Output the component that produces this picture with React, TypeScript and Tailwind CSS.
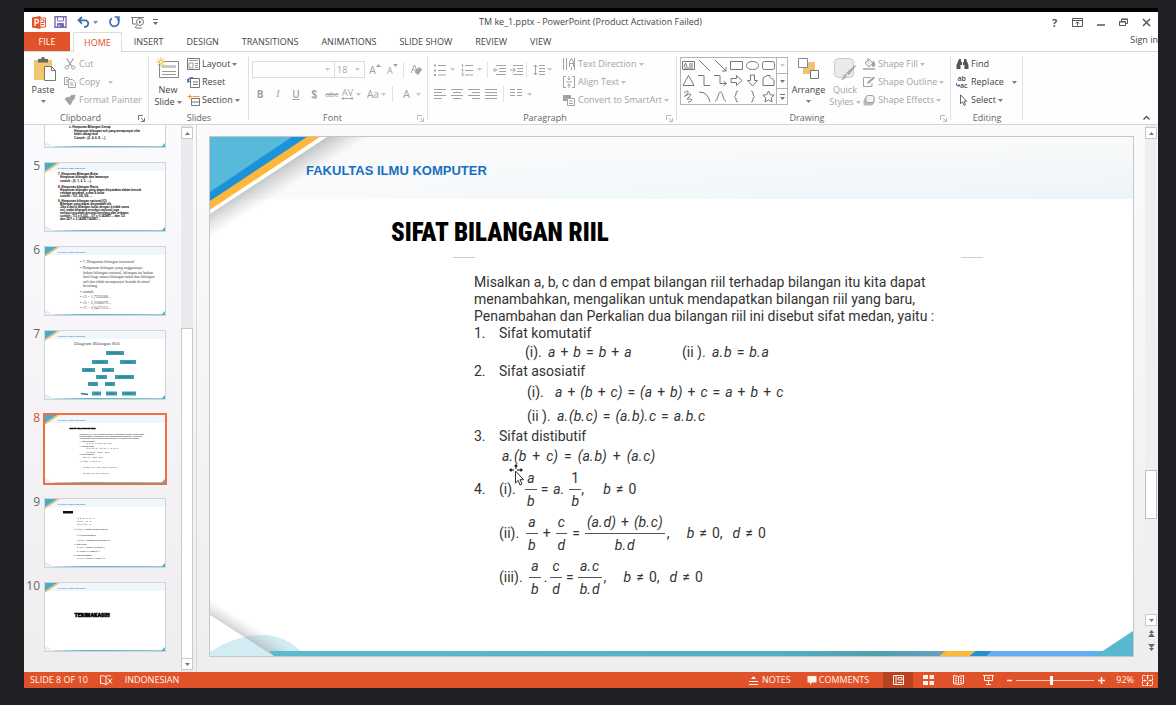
import React from "react";
import type { ReactNode } from "react";

type Kids = { children?: ReactNode };

/* ---------- small building blocks ---------- */

function Icon({ w = 12, h = 12, className = "", children }: Kids & { w?: number; h?: number; className?: string }) {
  return (
    <svg
      width={w}
      height={h}
      viewBox={`0 0 ${w} ${h}`}
      className={`shrink-0 ${className}`}
      fill="none"
      stroke="currentColor"
      strokeWidth="1"
      aria-hidden="true"
    >
      {children}
    </svg>
  );
}

function Caret({ className = "" }: { className?: string }) {
  return (
    <Icon w={5} h={3} className={className}>
      <path d="M0 0h5L2.500 3z" fill="currentColor" stroke="none" />
    </Icon>
  );
}

function Launcher({ className = "text-[#888]" }: { className?: string }) {
  return (
    <button aria-label="More options" className={`absolute right-1 bottom-[2px] ${className}`}>
      <Icon w={7} h={7}>
        <path d="M.5 5V.5H5M3 3l3 3M6.500 3v3.500H3" />
      </Icon>
    </button>
  );
}

function Group({ label, className, launcher, children }: Kids & { label: string; className: string; launcher?: string }) {
  return (
    <section
      aria-label={label}
      className={`relative flex shrink-0 flex-col after:absolute after:top-1 after:right-0 after:bottom-1 after:w-px after:bg-[#e1e1e1] ${className}`}
    >
      <div className="flex flex-1 items-start">{children}</div>
      <div className="h-3 text-center leading-3 text-[#666]">{label}</div>
      {launcher && <Launcher className={launcher} />}
    </section>
  );
}

function Row({ icon, label, caret, wide, dim }: { icon: ReactNode; label: string; caret?: boolean; wide?: boolean; dim?: boolean }) {
  return (
    <button className={`flex h-[18px] items-center whitespace-nowrap ${dim ? "text-[#a3a3a3]" : "text-[#444]"}`}>
      <span className="flex w-[15px] items-center">{icon}</span>
      {label}
      {caret && <Caret className={wide ? "ml-2 opacity-70" : "ml-[2px] opacity-70"} />}
    </button>
  );
}

function Sep({ className = "" }: { className?: string }) {
  return <span className={`h-4 w-px bg-[#e3e3e3] ${className}`} />;
}

/* ---------- title bar and tabs ---------- */

function TitleBar() {
  return (
    <header className="flex h-5 items-center bg-white text-[#444]">
      <div className="flex flex-1 items-center pl-2">
        <Icon w={14} h={13}>
          <path d="M7 2h6.500v9H7" fill="#fff" stroke="#e0532a" />
          <path d="M9 4h3v2.500H9M9 8.500h3" stroke="#e0532a" />
          <path d="M0 1.500 8.500 0v13L0 11.500z" fill="#e0532a" stroke="none" />
          <path d="M3 10V3.500h1.800a1.600 1.600 0 0 1 0 3.500H3" stroke="#fff" strokeWidth="1.300" />
        </Icon>
        <button aria-label="Save" className="ml-2 text-[#7a6bb0]">
          <Icon w={13} h={12}>
            <path d="M1 .8h11v10.500H1z" strokeWidth="1.400" />
            <path d="M3.500 1v4h6V1" />
            <path d="M3.500 7.500h6V11h-6z" fill="currentColor" />
            <path d="M5 9v2" stroke="#fff" />
          </Icon>
        </button>
        <button aria-label="Undo" className="ml-[10px] flex items-center text-[#3d6db5]">
          <Icon w={13} h={12}>
            <path d="M5 1 1.500 4.300 5 7.600M2 4.300h6a3.300 3.300 0 0 1 0 6.600H7" strokeWidth="1.800" />
          </Icon>
          <Caret className="ml-[3px] text-[#888]" />
        </button>
        <button aria-label="Repeat" className="ml-[10px] text-[#3d6db5]">
          <Icon w={13} h={12}>
            <path d="M4 2.200a4.400 4.400 0 1 0 5 .2" strokeWidth="1.700" />
            <path d="M6.500 1h4.500v4.500" strokeWidth="1.400" />
          </Icon>
        </button>
        <button aria-label="Start from beginning" className="ml-[10px] text-[#777]">
          <Icon w={14} h={13}>
            <path d="M0 1.500h13M1.500 2v6H5M4 12l2-3.500M5 12h6" />
            <circle cx="9" cy="6" r="3.500" fill="#fff" />
            <path d="M8 4.300v3.400L10.700 6z" fill="currentColor" stroke="none" />
          </Icon>
        </button>
        <button aria-label="Customize toolbar" className="ml-2 text-[#666]">
          <Icon w={5} h={6}>
            <path d="M0 .5h5" />
            <path d="M0 3h5L2.500 6z" fill="currentColor" stroke="none" />
          </Icon>
        </button>
      </div>
      <h1 className="pr-[9px] whitespace-nowrap">TM ke_1.pptx - PowerPoint (Product Activation Failed)</h1>
      <div className="flex flex-1 justify-end text-[#555]">
        <button aria-label="Help" className="flex w-[23px] items-center justify-center text-[11px] leading-none font-bold">
          ?
        </button>
        <button aria-label="Ribbon display options" className="flex w-[23px] items-center justify-center">
          <Icon w={11} h={9}>
            <path d="M.5.5h10v8H.5zM.5 2.500h10M5.500 7.500V4M3.800 5.500l1.700-1.700 1.700 1.700" />
          </Icon>
        </button>
        <button aria-label="Minimize" className="flex w-[23px] items-center justify-center">
          <Icon w={8} h={9}>
            <path d="M0 7h8" strokeWidth="1.500" />
          </Icon>
        </button>
        <button aria-label="Restore" className="flex w-[23px] items-center justify-center">
          <Icon w={9} h={9}>
            <path d="M.5 3.500h6v4h-6zM.5 4h6M2.500 3V1h6v4.500H7M2.500 1.300h6" />
          </Icon>
        </button>
        <button aria-label="Close" className="flex w-[23px] items-center justify-center">
          <Icon w={9} h={9}>
            <path d="m1 1 7 7M8 1 1 8" strokeWidth="1.500" />
          </Icon>
        </button>
      </div>
    </header>
  );
}

function Tabs() {
  const tabs = ["INSERT", "DESIGN", "TRANSITIONS", "ANIMATIONS", "SLIDE SHOW", "REVIEW", "VIEW"];
  return (
    <nav className="flex h-5 gap-px border-b border-[#d9d9d9] bg-white text-[#444]">
      <button className="w-[46px] bg-[#e0532a] text-white">FILE</button>
      <button className="-mb-px ml-[2px] border border-b-0 border-[#dcdcdc] bg-white px-[10px] text-[#dd4f2b]">HOME</button>
      {tabs.map((t) => (
        <button key={t} className="px-[11px] whitespace-nowrap">
          {t}
        </button>
      ))}
      <a href="#signin" className="ml-auto leading-4">
        Sign in
      </a>
    </nav>
  );
}

/* ---------- ribbon ---------- */

function BigButton({ icon, lines, caretBelow, dim, className }: { icon: ReactNode; lines: string[]; caretBelow?: boolean; dim?: boolean; className: string }) {
  return (
    <button className={`flex shrink-0 flex-col items-center pt-[5px] leading-3 ${dim ? "text-[#a3a3a3]" : "text-[#444]"} ${className}`}>
      {icon}
      <span className="mt-[2px]">{lines[0]}</span>
      {lines[1] && (
        <span className="flex items-center gap-[2px]">
          {lines[1]}
          <Caret className="opacity-70" />
        </span>
      )}
      {caretBelow && <Caret className="mt-1 opacity-70" />}
    </button>
  );
}

function ClipboardGroup() {
  return (
    <Group label="Clipboard" className="w-[125px] pr-3" launcher="text-[#777]">
      <BigButton
        className="w-[38px]"
        lines={["Paste"]}
        caretBelow
        icon={
          <Icon w={24} h={25} className="ml-1">
            <path d="M1 3h18v20H1z" fill="#f0c66e" stroke="none" />
            <path d="M5 2h3a2 2 0 0 1 4 0h3v3.500H5z" fill="#666" stroke="none" />
            <path d="M11.500 9.500h7l4 4v10h-11z" fill="#fff" stroke="#777" />
            <path d="M18.500 9.500v4h4" stroke="#777" />
          </Icon>
        }
      />
      <div className="flex shrink-0 flex-col pt-[3px] pl-[2px]">
        <Row
          dim
          label="Cut"
          icon={
            <Icon>
              <path d="m2.500.5 5.500 8M9.500.5 4 8.500" strokeWidth="1.300" />
              <circle cx="2.700" cy="9.500" r="1.700" />
              <circle cx="9.300" cy="9.500" r="1.700" />
            </Icon>
          }
        />
        <Row
          dim
          label="Copy"
          caret
          wide
          icon={
            <Icon>
              <path d="M4 8.500H.5v-7h4l2 2M2 4h2M2 6h2" />
              <path d="M4.500 3.500h4l3 3v5h-7zM6 7h3M6 9h4" fill="#fff" />
            </Icon>
          }
        />
        <Row
          dim
          label="Format Painter"
          icon={
            <Icon>
              <path d="m1 5 3-2 4 4.500L6 11z" fill="currentColor" />
              <path d="M5.500 4.500 8 2l2 2-2 2zM9 3l2-2" fill="currentColor" strokeWidth="2" />
            </Icon>
          }
        />
      </div>
    </Group>
  );
}

function SlidesGroup() {
  return (
    <Group label="Slides" className="w-[100px]">
      <BigButton
        className="w-[38px]"
        lines={["New", "Slide"]}
        icon={
          <Icon w={24} h={25}>
            <path d="M3.500 4.500h19v16h-19z" fill="#fff" stroke="#888" />
            <path d="M6 8h14v3H6z" fill="#c9c9c9" stroke="none" />
            <path d="M6 14.500h14M6 17.500h14" stroke="#999" />
            <path d="M5 0v10M0 5h10M1.500 1.500l7 7M8.500 1.500l-7 7" stroke="#eebf55" />
            <circle cx="5" cy="5" r="2" fill="#fff3cf" stroke="#eebf55" />
          </Icon>
        }
      />
      <div className="flex shrink-0 flex-col pt-[3px]">
        <Row
          label="Layout"
          caret
          icon={
            <Icon w={13} h={12}>
              <path d="M.5.500h12v11H.5z" stroke="#777" />
              <path d="M2 2.500h9M2 5h4v5H2zM8 5.500h3M8 7.500h3M8 9.500h3" stroke="#999" />
            </Icon>
          }
        />
        <Row
          label="Reset"
          icon={
            <Icon w={13} h={12}>
              <path d="M3.500 2.500h9v9h-9zM6 6h5M6 8.500h5" stroke="#777" />
              <path d="M1 5.500C1 2 4 .8 7 2.500M.5 3l.5 3 3-1" stroke="#3d6db5" strokeWidth="1.300" />
            </Icon>
          }
        />
        <Row
          label="Section"
          caret
          icon={
            <Icon w={13} h={12}>
              <path d="M4.500 4.500h8v7h-8zM4.500 8h8" stroke="#777" />
              <path d="M6 2.500h6.500M3 0v5M.5 2.500h5" stroke="#e99a3c" />
            </Icon>
          }
        />
      </div>
    </Group>
  );
}

function FontGroup() {
  const btn = "flex h-4 w-[18px] items-center justify-center";
  return (
    <Group label="Font" className="w-[179px] pr-3" launcher="text-[#bbb]">
      <div className="flex shrink-0 flex-col pt-[9px] pl-[3px] text-[#a3a3a3]">
        <div className="flex h-[17px] items-center">
          <label className="relative flex h-full w-[83px] items-center border border-[#dcdcdc]">
            <input aria-label="Font name" className="w-full bg-transparent px-1 outline-none" />
            <Caret className="mr-1 opacity-60" />
          </label>
          <label className="-ml-px flex h-full w-[31px] items-center border border-[#dcdcdc]">
            <input aria-label="Font size" defaultValue="18" className="w-5 bg-transparent pl-[2px] outline-none" />
            <Caret className="opacity-60" />
          </label>
          <button aria-label="Increase font size" className="ml-1 flex w-[18px] items-start leading-none">
            <span className="text-[11px]">A</span>
            <Icon w={5} h={3}>
              <path d="M0 3h5L2.500 0z" fill="currentColor" stroke="none" />
            </Icon>
          </button>
          <button aria-label="Decrease font size" className="flex w-[14px] items-start leading-none">
            <span className="pt-[2px] text-[9px]">A</span>
            <Caret />
          </button>
          <Sep className="ml-[2px]" />
          <button aria-label="Clear formatting" className="ml-[6px]">
            <Icon>
              <path d="m1 9 3.500-8L8 9M2.500 6h4" />
              <path d="m5 8 4-4.500 2.500 2L8 10.500z" fill="currentColor" />
            </Icon>
          </button>
        </div>
        <div className="mt-2 flex h-4 items-center text-[10px]">
          <button className={`${btn} -ml-[1px] font-bold`}>B</button>
          <button className={`${btn} font-[Liberation_Serif] italic`}>I</button>
          <button className={`${btn} font-semibold underline`}>U</button>
          <button className={`${btn} font-bold [text-shadow:1px_1px_0_#ccc]`}>S</button>
          <button className={`${btn} text-[8px] line-through`}>abc</button>
          <button className="flex w-[23px] items-center gap-[2px]">
            <span className="flex flex-col items-center text-[9px] leading-[9px]">
              AV
              <Icon w={13} h={3}>
                <path d="M1 1.500h11M2.500 0 1 1.500 2.500 3M10.500 0 12 1.500 10.500 3" />
              </Icon>
            </span>
            <Caret className="opacity-60" />
          </button>
          <button className="ml-[3px] flex w-[22px] items-center gap-[2px]">
            Aa
            <Caret className="opacity-60" />
          </button>
          <Sep className="ml-[3px]" />
          <button aria-label="Font color" className="ml-[10px] flex items-center gap-[6px] text-[11px]">
            A
            <Caret className="opacity-60" />
          </button>
        </div>
      </div>
    </Group>
  );
}

function Lines({ d }: { d: string }) {
  return (
    <Icon w={13} h={10}>
      <path d={d} />
    </Icon>
  );
}

function ParagraphGroup() {
  const list = "flex items-center gap-1";
  return (
    <Group label="Paragraph" className="w-[249px] pr-[15px]" launcher="text-[#bbb]">
      <div className="flex w-[135px] shrink-0 flex-col pt-[9px] pl-[6px] text-[#a3a3a3]">
        <div className="flex h-[17px] items-center">
          <button aria-label="Bullets" className={list}>
            <Icon w={12} h={12}>
              <path d="M0 1.500h2M0 6.500h2M0 11h2" strokeWidth="2" />
              <path d="M4 1.500h8M4 6.500h8M4 11h8" />
            </Icon>
            <Caret className="opacity-60" />
          </button>
          <button aria-label="Numbering" className={`${list} ml-[6px]`}>
            <Icon w={12} h={12}>
              <path d="M1.500 0v3M.5 5h1v2h1M.5 9h1.500v3H.5M4 1.500h8M4 6.500h8M4 11h8" />
            </Icon>
            <Caret className="opacity-60" />
          </button>
          <Sep className="ml-[5px]" />
          <button aria-label="Decrease indent" className="ml-[5px]">
            <Lines d="M3 .5h10M6 3.500h7M6 6.500h7M3 9.500h10M5 5H.5M3 2.500.500 5 3 7.500" />
          </button>
          <button aria-label="Increase indent" className="ml-1">
            <Lines d="M3 .5h10M7 3.500h6M7 6.500h6M3 9.500h10M0 5h5M3 2.500 5.500 5 3 7.500" />
          </button>
          <Sep className="ml-[3px]" />
          <button aria-label="Line spacing" className={`${list} ml-[6px]`}>
            <Icon w={12} h={12}>
              <path d="M2.500 1v10M.5 3l2-2 2 2M.5 9l2 2 2-2M6 1.500h6M6 4.500h6M6 7.500h6M6 10.500h6" />
            </Icon>
          </button>
          <Caret className="ml-[2px] opacity-60" />
        </div>
        <div className="mt-2 flex h-4 items-center gap-1">
          <button aria-label="Align left">
            <Lines d="M0 .5h12M0 3.500h8M0 6.500h12M0 9.500h8" />
          </button>
          <button aria-label="Center">
            <Lines d="M0 .5h12M2 3.500h8M0 6.500h12M2 9.500h8" />
          </button>
          <button aria-label="Align right">
            <Lines d="M0 .5h12M4 3.500h8M0 6.500h12M4 9.500h8" />
          </button>
          <button aria-label="Justify">
            <Lines d="M0 .5h12M0 3.500h12M0 6.500h12M0 9.500h12" />
          </button>
          <Sep className="ml-[1px]" />
          <button aria-label="Columns" className={`${list} ml-[2px]`}>
            <Lines d="M0 .5h5M7 .5h5M0 3.500h5M7 3.500h5M0 6.500h5M7 6.500h5" />
            <Caret className="opacity-60" />
          </button>
        </div>
      </div>
      <div className="flex shrink-0 flex-col pt-[3px]">
        <Row
          dim
          caret
          label="Text Direction"
          icon={
            <Icon>
              <path d="M.5 0v12M3.500 0v12M6.500 9V4l2-3.500 2 3.500v5M6.500 5.500h4M8.500 9v3M11.500 0v12" />
            </Icon>
          }
        />
        <Row
          dim
          caret
          label="Align Text"
          icon={
            <Icon>
              <path d="M3 .500H.5v11H3M9 .500h2.500v11H9M3 6h6M6 0v4M4.500 2.500 6 4l1.500-1.500M6 12V8M4.500 9.500 6 8l1.500 1.500" />
            </Icon>
          }
        />
        <Row
          dim
          caret
          label="Convert to SmartArt"
          icon={
            <Icon>
              <path d="M0 1h8v3H4v3H0z" fill="currentColor" stroke="none" />
              <path d="M4.500 4.500h7v7h-7zM6 7h4M6 9.500h4" fill="#fff" />
            </Icon>
          }
        />
      </div>
    </Group>
  );
}

const shapePaths = [
  "M.5 2.500h12v8H.5zM2 8l1.500-4L5 8M7 5h4M7 7h4M2 9h9",
  "m1 1 11 11",
  "m1 1 11 11M12 8v4H8",
  "M.5 2.500h12v8H.5z",
  "M6.500 2.500c8 0 8 8 0 8s-8-8 0-8z",
  "M2.500 2.500h8q2 0 2 2v4q0 2-2 2h-8q-2 0-2-2v-4q0-2 2-2z",
  "M6.500 1.500 12 11.500H1z",
  "M0 1.500h6v10h6",
  "M0 1.500h6v8h6M9.500 7l3 2.500-3 2.500",
  "M1 4.500h5.500v-3L12 6.500l-5.500 5v-3H1z",
  "M4.500 1v5.500h-3L6.500 12l5-5.500h-3V1z",
  "M1 4l4-2.500h3C6.500 5 12 4 12 7v4.500H1z",
  "M2 3c3-3 6-2 3 1s-4 3 0 1 5-1 2 2-3 2 1 2 1 3-2 3",
  "M1 2q9 0 11 10",
  "M1 11C4 11 4 2 6.500 2S9 11 12 11",
  "M8 1q-2 0-2 2v2L4.500 6.500 6 8v2q0 2 2 2",
  "M5 1q2 0 2 2v2l1.500 1.500L7 8v2q0 2-2 2",
  "m6.500 1 1.700 3.700 4 .5-3 2.700.8 4-3.500-2L3 11.900l.8-4-3-2.700 4-.5z",
];

function DrawingGroup() {
  return (
    <Group label="Drawing" className="w-[274px] pr-[14px]" launcher="text-[#bbb]">
      <div className="mt-[5px] ml-[3px] flex h-[48px] w-[108px] shrink-0 border border-[#b5b5b5] text-[#777]">
        <div className="grid flex-1 grid-cols-6 grid-rows-3 place-items-center">
          {shapePaths.map((d) => (
            <button key={d} aria-label="Insert shape">
              <Icon w={13} h={13}>
                <path d={d} />
              </Icon>
            </button>
          ))}
        </div>
        <div className="flex w-[11px] flex-col divide-y divide-[#b5b5b5] border-l border-[#b5b5b5]">
          <button aria-label="Scroll shapes up" className="flex flex-1 items-center justify-center text-[#ccc]">
            <Caret />
          </button>
          <button aria-label="Scroll shapes down" className="flex flex-1 items-center justify-center">
            <Caret />
          </button>
          <button aria-label="More shapes" className="flex flex-1 flex-col items-center justify-center">
            <Icon w={5} h={6}>
              <path d="M0 .5h5" />
              <path d="M0 3h5L2.500 6z" fill="currentColor" stroke="none" />
            </Icon>
          </button>
        </div>
      </div>
      <BigButton
        className="ml-[2px] w-[37px]"
        lines={["Arrange"]}
        caretBelow
        icon={
          <Icon w={24} h={25}>
            <path d="M6 5h12v12H6z" fill="#efc36b" stroke="none" />
            <path d="M1.500 1.500h9v9h-9z" fill="#fff" stroke="#7a8aa8" />
            <path d="M13.500 13.500h8v8h-8z" fill="#fff" stroke="#777" />
          </Icon>
        }
      />
      <BigButton
        className="w-[36px]"
        lines={["Quick", "Styles"]}
        dim
        icon={
          <Icon w={24} h={25}>
            <rect x="1.500" y="1.500" width="19" height="19" rx="4" fill="#ebebeb" stroke="#c8c8c8" />
            <path d="m23 9-7 9-3-2L22 8z" fill="#aaa" stroke="none" />
            <path d="M14 17q0 6-7 6 3-1 3-4 1-3 4-2z" fill="#b5b5b5" stroke="none" />
          </Icon>
        }
      />
      <div className="flex shrink-0 flex-col pt-[3px]">
        <Row
          dim
          caret
          label="Shape Fill"
          icon={
            <Icon w={13}>
              <path d="m2 5 4-4 4 4-4 4zM5 0v4" fill="#eee" />
              <path d="M10.500 4q2 3 .5 4t-1.500-1zM0 11h12" fill="currentColor" strokeWidth="1.500" />
            </Icon>
          }
        />
        <Row
          dim
          caret
          label="Shape Outline"
          icon={
            <Icon w={13}>
              <path d="M8 1.500H.5v9H9V7" />
              <path d="m4 8 1-2.500 5.500-5 1.500 1.500L6.500 7z" fill="currentColor" stroke="none" />
            </Icon>
          }
        />
        <Row
          dim
          caret
          label="Shape Effects"
          icon={
            <Icon w={13}>
              <path d="M3 3h8v6l-2 2H1V6z" fill="#bbb" stroke="#bbb" />
              <rect x="3" y="1.500" width="8" height="7" rx="2" fill="#f4f4f4" />
            </Icon>
          }
        />
      </div>
    </Group>
  );
}

function EditingGroup() {
  return (
    <Group label="Editing" className="w-[72px]">
      <div className="flex flex-col pt-[3px] pl-[5px]">
        <Row
          label="Find"
          icon={
            <Icon w={13}>
              <path d="M3 1h2v3h3V1h2l2.500 6v4h-4V7h-4v4h-4V7z" fill="#555" stroke="none" />
              <path d="M6.500 1v6" stroke="#fff" />
            </Icon>
          }
        />
        <Row
          label="Replace"
          caret
          wide
          icon={
            <span className="flex flex-col text-[7px] leading-[7px] font-semibold">
              <span>ab</span>
              <span className="flex items-center">
                <Icon w={4} h={5} className="text-[#3d6db5]">
                  <path d="M.5 0v2.500H4M2.500 1 4 2.500 2.500 4" />
                </Icon>
                ac
              </span>
            </span>
          }
        />
        <Row
          label="Select"
          caret
          icon={
            <Icon w={13}>
              <path d="M4.500.8v9l2-2 1.500 3.500 1.500-.7L8 7.300h2.700z" fill="#fff" stroke="#666" />
            </Icon>
          }
        />
      </div>
    </Group>
  );
}

function Ribbon() {
  return (
    <div className="flex h-[73px] shrink-0 overflow-hidden border-b border-[#d5d5d5] bg-[#fefefe]">
      <ClipboardGroup />
      <SlidesGroup />
      <FontGroup />
      <ParagraphGroup />
      <DrawingGroup />
      <EditingGroup />
      <button aria-label="Collapse the ribbon" className="mt-auto mr-2 mb-1 ml-auto text-[#555]">
        <Icon w={7} h={5}>
          <path d="M.5 4.500 3.500 1.500l3 3" strokeWidth="1.400" />
        </Icon>
      </button>
    </div>
  );
}

/* ---------- thumbnails ---------- */

type Line = [number, number, string];

function TextLines({ lines, className }: { lines: Line[]; className: string }) {
  return (
    <g className={className}>
      {lines.map(([x, y, t]) => (
        <text key={`${x}-${y}`} x={x} y={y}>
          {t}
        </text>
      ))}
    </g>
  );
}

function ThumbFrame({ heading, children }: Kids & { heading: boolean }) {
  return (
    <svg viewBox="0 0 120 68" className="block w-full" aria-hidden="true">
      <defs>
        <linearGradient id="thumbBar" x1="0" x2="1">
          <stop offset="0" stopColor="#bfe3ec" />
          <stop offset=".3" stopColor="#5bb5ca" />
          <stop offset="1" stopColor="#8fcdd0" />
        </linearGradient>
      </defs>
      <path d="M0 0h120v68H0z" fill="#fff" />
      <path d="M0 0h120v8H0z" fill="#f0f6fa" />
      <path d="M0 0h12L0 8z" fill="#45abcf" />
      <path d="M12 0h2.500L0 9.800V8z" fill="#efbb55" />
      <path d="M0 62l9 6H0z" fill="#eee" />
      <path d="M8 67h109v1H8z" fill="url(#thumbBar)" />
      <path d="M120 64v4h-4z" fill="#56b3c8" />
      {heading && (
        <text x="12.500" y="5.500" className="fill-[#2a87c8] font-[Liberation_Sans] text-[2px] font-bold">
          FAKULTAS ILMU KOMPUTER
        </text>
      )}
      {children}
    </svg>
  );
}

const treeBoxes: [number, number, number][] = [
  [61, 20, 18], [47, 29, 16], [75, 29, 16], [37, 37, 13], [57, 37, 12], [51, 44, 11],
  [70, 44, 19], [43, 51, 10], [60, 51, 10], [47, 60.5, 9], [61, 60.5, 11], [77, 60.5, 14],
];

const thumbs: { n?: number; body: ReactNode }[] = [
  {
    body: (
      <TextLines
        className="fill-black font-[Liberation_Sans] text-[3px] font-bold"
        lines={[
          [24, 49, "c. Himpunan Bilangan Genap"],
          [29, 52.5, "Himpunan bilangan asli yang mempunyai sifat"],
          [29, 56, "habis dibagi dua"],
          [29, 60, "Contoh : {2, 4, 6, 8, ...}"],
        ]}
      />
    ),
  },
  {
    n: 5,
    body: (
      <TextLines
        className="fill-black font-[Liberation_Sans] text-[3px] font-bold"
        lines={[
          [13, 11.5, "7. Himpunan Bilangan Bulat"],
          [15, 15, "Himpunan bilangan dan lawannya"],
          [15, 18.5, "contoh : {0, 1, 2, 3, ...}"],
          [13, 24.5, "8. Himpunan bilangan Rasio"],
          [15, 27.7, "Himpunan bilangan yang dapat dinyatakan dalam bentuk"],
          [15, 30.7, "sebagai pecahan, a dan b bulat"],
          [15, 33.7, "contoh : 1/2, 3/4, 5/6, ..."],
          [13, 39, "9. Himpunan bilangan rasional (Q)"],
          [15, 42, "Bilangan yang dapat dinyatakan a/b"],
          [15, 45, "Jika a dan b bilangan bulat dengan b tidak sama"],
          [15, 48, "nol, maka bilangan tersebut rasional juga"],
          [15, 51, "meliputi pecahan desimal berulang dan terbatas"],
          [15, 54, "contoh : 1/3 = 0,333... 1/7 = 0,142857... dan 1/2"],
          [15, 57.2, "dan 22/7 = 3,142857142857..."],
        ]}
      />
    ),
  },
  {
    n: 6,
    body: (
      <TextLines
        className="fill-[#444] font-[Liberation_Serif] text-[4px]"
        lines={[
          [35, 16, "•  7. Himpunan bilangan irrasional"],
          [35, 22, "•     Himpunan bilangan yang anggotanya"],
          [38, 26.5, "bukan bilangan rasional, bilangan ini bukan"],
          [38, 31, "hasil bagi antara bilangan bulat dan bilangan"],
          [38, 35.5, "asli dan tidak mempunyai bentuk desimal"],
          [38, 40, "berulang"],
          [35, 45.5, "•     contoh"],
          [35, 51, "•  √3 = 1,7320508..."],
          [35, 56.5, "•  √5 = 2,2360679..."],
          [35, 62, "•  √7 = 2,6457513..."],
        ]}
      />
    ),
  },
  {
    n: 7,
    body: (
      <>
        <text x="29" y="13.500" className="fill-[#444] font-[Liberation_Serif] text-[5px]">
          Diagram Bilangan Riil
        </text>
        {treeBoxes.map(([x, y, w]) => (
          <g key={`${x}-${y}`}>
            <rect x={x} y={y} width={w} height="4" fill="#3d9bb0" />
            <path d={`M${x + 3} ${y + 2}h${w - 6}`} stroke="#1f6f83" strokeWidth=".7" />
          </g>
        ))}
        <path d="M36 62.500l7 1" stroke="#2f7489" strokeWidth="1.500" />
      </>
    ),
  },
  {
    n: 8,
    body: (
      <>
        <text x="24.500" y="14" className="fill-black stroke-black font-[Liberation_Sans] text-[2.500px] font-bold [stroke-width:.5]">
          SIFAT BILANGAN RIIL
        </text>
        <TextLines
          className="fill-[#222] font-[Roboto] text-[2px]"
          lines={[
            [34.5, 20, "Misalkan a, b, c dan d empat bilangan riil terhadap bilangan itu kita dapat"],
            [34.5, 22.2, "menambahkan, mengalikan untuk mendapatkan bilangan riil yang baru,"],
            [34.5, 24.4, "Penambahan dan Perkalian dua bilangan riil ini disebut sifat medan,"],
            [34.5, 26.6, "1.  Sifat komutatif"],
            [41, 29, "(i). a + b = b + a        (ii). a.b = b.a"],
            [34.5, 31.5, "2.  Sifat asosiatif"],
            [41, 34, "(i). a + (b + c) = (a + b) + c = a + b + c"],
            [41, 37.5, "(ii). a.(b.c) = (a.b).c = a.b.c"],
            [34.5, 40, "3.  Sifat distibutif"],
            [38, 42.7, "a.(b + c) = (a.b) + (a.c)"],
            [34.5, 47, "4.  (i). a/b = a. 1/b,   b ≠ 0"],
            [38, 53, "(ii). a/b + c/d = (a.d) + (b.c) / b.d,  b ≠ 0"],
            [38, 58.5, "(iii). a/b . c/d = a.c / b.d,  b ≠ 0"],
          ]}
        />
      </>
    ),
  },
  {
    n: 9,
    body: (
      <>
        <path d="M18 12h10v2.500H18z" fill="#111" />
        <TextLines
          className="fill-[#222] font-[Roboto] text-[2px]"
          lines={[
            [32, 20, "(i).  a + 0 = 0 + a = a"],
            [32, 23, "(ii).  a.1 = 1.a = a"],
            [32, 26, "(iii).  a + (-a) = 0"],
            [29, 31, "6.  (i).  a/b = c dengan syarat b tidak nol"],
            [32, 36.5, "(ii).  a/0 tak terdefinisi"],
            [32, 42, "(iii).  0/a = 0 dengan syarat a tidak nol"],
            [29, 46, "7.  Sifat urutan"],
            [32, 49, "a < b, a = b atau a > b untuk a, b"],
            [32, 53, "a < b dan b < c maka a < c"],
            [29, 57, "8.  Sifat kelengkapan"],
            [32, 60, "a + b < c + d bila a < c dan b < d"],
          ]}
        />
      </>
    ),
  },
  {
    n: 10,
    body: (
      <text x="29.500" y="33.500" className="fill-black stroke-black font-['Roboto_Condensed','Roboto',sans-serif] text-[6px] font-black [stroke-width:.5]">
        TERIMAKASIH
      </text>
    ),
  },
];

function UpDown({ up, label }: { up?: boolean; label: string }) {
  return (
    <button aria-label={label} className="flex h-3 w-full shrink-0 items-center justify-center border border-[#c9c9c9] bg-white text-[#777]">
      <Icon w={5} h={3}>
        <path d={up ? "M0 3h5L2.500 0z" : "M0 0h5L2.500 3z"} fill="currentColor" stroke="none" />
      </Icon>
    </button>
  );
}

function ThumbnailPane() {
  return (
    <aside className="flex shrink-0 border-r border-[#d8d8da]">
      <ol className="flex w-[157px] flex-col justify-end gap-[14px] overflow-hidden pr-[15px] pb-5">
        {thumbs.map(({ n, body }, i) => {
          const active = n === 8;
          return (
            <li key={i} className="flex shrink-0 items-start">
              <span className={`-mt-[2px] w-5 shrink-0 pr-1 text-right text-[12px] leading-3 ${active ? "text-[#d35230]" : "text-[#666]"}`}>{n}</span>
              <button
                aria-label={n ? `Slide ${n}` : "Previous slide thumbnail"}
                className={`flex-1 border ${active ? "border-[#ee7040] outline outline-[#ee7040]" : "border-[#cfd4dc]"}`}
              >
                <ThumbFrame heading={n !== undefined}>{body}</ThumbFrame>
              </button>
            </li>
          );
        })}
      </ol>
      <div className="mr-[3px] flex w-3 flex-col bg-[#eae9ed] py-[2px]">
        <UpDown up label="Scroll thumbnails up" />
        <div className="grow-[190]" />
        <div className="grow-[330] border-x border-t border-[#c9c9c9] bg-white" />
        <UpDown label="Scroll thumbnails down" />
      </div>
    </aside>
  );
}

/* ---------- slide ---------- */

function SlideArt() {
  return (
    <svg viewBox="0 0 925 520" preserveAspectRatio="none" className="absolute inset-0 h-full w-full" aria-hidden="true">
      <defs>
        <linearGradient id="band" x1="0" x2="1">
          <stop offset="0" stopColor="#fbfbfc" />
          <stop offset=".4" stopColor="#f3f8fb" />
          <stop offset="1" stopColor="#edf4f8" />
        </linearGradient>
        <linearGradient id="bandFade" x1="0" x2="0" y1="0" y2="1">
          <stop offset="0" stopColor="#fafafa" />
          <stop offset="1" stopColor="#fafafa" stopOpacity="0" />
        </linearGradient>
        <linearGradient id="shade" gradientUnits="userSpaceOnUse" x1="58" y1="38" x2="70" y2="57">
          <stop offset="0" stopColor="#8a8d90" stopOpacity=".5" />
          <stop offset="1" stopColor="#aaa" stopOpacity="0" />
        </linearGradient>
        <linearGradient id="shadeLow" gradientUnits="userSpaceOnUse" x1="32" y1="500" x2="40" y2="487">
          <stop offset="0" stopColor="#8f9294" stopOpacity=".45" />
          <stop offset="1" stopColor="#bbb" stopOpacity="0" />
        </linearGradient>
        <linearGradient id="bar" x1="0" x2="1">
          <stop offset="0" stopColor="#5bbad0" />
          <stop offset=".75" stopColor="#52b0c2" />
          <stop offset=".9" stopColor="#4f9fae" />
          <stop offset="1" stopColor="#6d9fc4" />
        </linearGradient>
      </defs>
      <path d="M0 0h925v62H0z" fill="url(#band)" />
      <path d="M0 0h925v62H0z" fill="url(#bandFade)" />
      <path d="M117 0h42L0 106V77z" fill="url(#shade)" />
      <path d="M0 0h117L0 77z" fill="#fff" />
      <path d="M0 0h110L0 73z" fill="#ffb63c" />
      <path d="M0 0h97L0 64z" fill="#1c92d8" />
      <path d="M0 0h82L0 55z" fill="#58bada" />
      <path d="M0 516Q25 499 54 499q20 0 38 17v4H0z" fill="#d3ecf4" />
      <path d="M0 479v-24l98 61v4H64z" fill="url(#shadeLow)" />
      <path d="M59 515h682l-6 5H64z" fill="url(#bar)" />
      <path d="M737 515h30l-6 5h-30z" fill="#fbb93a" />
      <path d="M767 515h18l-6 5h-18z" fill="#2590d0" />
      <path d="M783 515h112v5H778z" fill="#62aef0" />
      <path d="M925 495v25h-38z" fill="#57b8d0" />
    </svg>
  );
}

/* One term of a formula: italic letters, with a little air after each product dot. */
function Term({ text }: { text: string }) {
  const parts = text.split(".");
  return (
    <span className={/[a-d]/.test(text) ? "italic" : ""}>
      {parts.map((p, i) => (
        <span key={i}>
          {p}
          {i < parts.length - 1 && <span className="pr-px">.</span>}
        </span>
      ))}
    </span>
  );
}

function Expr({ children, className = "" }: { children: string; className?: string }) {
  return (
    <span className={`flex gap-[5px] whitespace-nowrap ${className}`}>
      {children.split(" ").map((t, i) => (
        <Term key={i} text={t} />
      ))}
    </span>
  );
}

function Frac({ top, bottom }: { top: string; bottom: string }) {
  return (
    <span className="flex flex-col items-center divide-y divide-[#555] leading-[22px]">
      <Expr className="w-full justify-center px-[2px]">{top}</Expr>
      <Expr className="w-full justify-center px-[2px]">{bottom}</Expr>
    </span>
  );
}

function NonZero() {
  return (
    <span className="flex gap-[10px]">
      <Expr>b ≠ 0,</Expr>
      <Expr>d ≠ 0</Expr>
    </span>
  );
}

function Item({ n, children }: Kids & { n: string }) {
  return (
    <p className="flex">
      <span className="w-[25px]">{n}</span>
      {children}
    </p>
  );
}

function Slide() {
  return (
    <article className="relative aspect-[925/521] w-full border border-[#c4c6c8] bg-white">
      <SlideArt />
      <div className="relative flex flex-col">
        <p className="flex h-[63px] items-center pt-1 pl-24 font-[Liberation_Sans] text-[13px] font-bold whitespace-nowrap text-[#166fc0]">
          FAKULTAS ILMU KOMPUTER
        </p>
        <h2 className="mt-[17px] pl-[181px] font-['Roboto_Condensed','Roboto',sans-serif] text-[25px] leading-8 font-black whitespace-nowrap text-black">
          SIFAT BILANGAN RIIL
        </h2>
        <div className="mt-2 flex justify-between pr-[150px] pl-[243px]">
          <span className="h-px w-[22px] bg-[#c9cdcd]" />
          <span className="h-px w-[22px] bg-[#c9cdcd]" />
        </div>
        <div className="mt-4 pl-[264px] font-[Roboto] text-[14px] leading-[17px] whitespace-nowrap text-[#333]">
          <p>
            Misalkan a, b, c dan d empat bilangan riil terhadap bilangan itu kita dapat
            <br />
            menambahkan, mengalikan untuk mendapatkan bilangan riil yang baru,
            <br />
            Penambahan dan Perkalian dua bilangan riil ini disebut sifat medan, yaitu :
          </p>
          <Item n="1.">Sifat komutatif</Item>
          <div className="flex h-[21px] items-center pl-[51px]">
            <span className="w-[23px]">(i).</span>
            <Expr className="w-[134px]">a + b = b + a</Expr>
            <span className="w-[30px]">(ii ).</span>
            <Expr>a.b = b.a</Expr>
          </div>
          <Item n="2.">Sifat asosiatif</Item>
          <div className="flex h-6 items-center pl-[53px]">
            <span className="w-[28px]">(i).</span>
            <Expr>a + (b + c) = (a + b) + c = a + b + c</Expr>
          </div>
          <div className="flex h-6 items-center pl-[53px]">
            <span className="w-[30px]">(ii ).</span>
            <Expr>a.(b.c) = (a.b).c = a.b.c</Expr>
          </div>
          <Item n="3.">Sifat distibutif</Item>
          <div className="flex h-[22px] items-center pl-7">
            <Expr className="gap-[6px]">a.(b + c) = (a.b) + (a.c)</Expr>
          </div>
          <div className="flex h-11 items-center">
            <span className="w-[25px]">4.</span>
            <span className="w-[26px]">(i).</span>
            <span className="flex items-center gap-1">
              <Frac top="a" bottom="b" />
              <Expr>= a.</Expr>
              <Frac top="1" bottom="b" />
            </span>
            <span className="w-[22px]">,</span>
            <Expr>b ≠ 0</Expr>
          </div>
          <div className="flex h-11 items-center pl-[25px]">
            <span className="w-[27px]">(ii).</span>
            <span className="flex items-center gap-[5px]">
              <Frac top="a" bottom="b" />
              <span>+</span>
              <Frac top="c" bottom="d" />
              <span>=</span>
              <Frac top="(a.d) + (b.c)" bottom="b.d" />
            </span>
            <span className="w-[22px] pl-[2px]">,</span>
            <NonZero />
          </div>
          <div className="flex h-11 items-center pl-[25px]">
            <span className="w-[30px]">(iii).</span>
            <span className="flex items-center gap-1">
              <Frac top="a" bottom="b" />
              <span className="-mx-[1px]">.</span>
              <Frac top="c" bottom="d" />
              <span>=</span>
              <Frac top="a.c" bottom="b.d" />
            </span>
            <span className="w-[22px] pl-[2px]">,</span>
            <NonZero />
          </div>
        </div>
      </div>
      <Icon w={16} h={23} className="absolute top-[327px] left-[299px] text-black">
        <path d="M7 1v11M1 6h12" strokeDasharray="4 3" />
        <path d="M7 0l2 2.500H5zM0 6l2.500-2v4zM14 6l-2.500-2v4z" fill="currentColor" stroke="none" />
        <path d="M6.500 7v12l2.700-2.600L11 21l2-1-2-4.300h3.500z" fill="#fff" stroke="#333" />
      </Icon>
    </article>
  );
}

function SlidePane() {
  return (
    <main className="flex min-w-0 flex-1">
      <div className="min-w-0 flex-1 pt-[11px] pr-[11px] pl-3">
        <Slide />
      </div>
      <div className="mr-[1px] flex w-3 flex-col bg-[#efeef1] pt-[2px]">
        <UpDown up label="Scroll up" />
        <div className="grow-[333]" />
        <div className="grow-[47] border border-[#c0c0c0] bg-white" />
        <div className="grow-[96]" />
        <UpDown label="Scroll down" />
        <button aria-label="Previous slide" className="flex h-[14px] items-center justify-center text-[#666]">
          <Icon w={7} h={7}>
            <path d="M3.500 0 6 3H1zM3.500 3 6 6H1z" fill="currentColor" stroke="none" />
            <path d="M.5 6.500h6" />
          </Icon>
        </button>
        <button aria-label="Next slide" className="mb-[18px] flex h-[14px] items-center justify-center text-[#666]">
          <Icon w={7} h={7}>
            <path d="M3.500 4 6 1H1zM3.500 7 6 4H1z" fill="currentColor" stroke="none" />
            <path d="M.5 .5h6" />
          </Icon>
        </button>
      </div>
    </main>
  );
}

/* ---------- status bar ---------- */

function StatusBar() {
  const view = "flex h-4 w-[30px] items-center justify-center";
  return (
    <footer className="flex h-4 shrink-0 items-center bg-[#e0532a] whitespace-nowrap text-[#fff3ea]">
      <span className="pl-[6px]">SLIDE 8 OF 10</span>
      <button aria-label="Spelling" className="ml-3">
        <Icon w={13} h={10}>
          <path d="M6 9.500V1.500Q3 0 .5 1v7.500q3-.5 5.500 1Q7 8.500 8 8.500M6 1.500Q8 0 11 1M8 3.500l4 5M12 3.500l-4 5" />
        </Icon>
      </button>
      <button className="ml-3">INDONESIAN</button>
      <button className="ml-auto flex items-center gap-1">
        <Icon w={9} h={9}>
          <path d="M0 5.500h9M0 8.500h9" />
          <path d="M4.500 0 7 3H2z" fill="currentColor" stroke="none" />
        </Icon>
        NOTES
      </button>
      <button className="ml-4 flex items-center gap-[2px]">
        <Icon w={10} h={9}>
          <path d="M.5 0h9v6.500H5L3 9V6.500H.5z" fill="currentColor" stroke="none" />
        </Icon>
        COMMENTS
      </button>
      <button aria-label="Normal view" className={`${view} ml-[14px] bg-[#b9431f]`}>
        <Icon w={11} h={10}>
          <path d="M.5.500h10v9H.5zM3 .5v9M5 2.500h4v2.500H5zM4.500 7.500h5" />
        </Icon>
      </button>
      <button aria-label="Slide sorter" className={view}>
        <Icon w={11} h={10}>
          <path d="M0 0h5v4H0zM6.500 0h5v4h-5zM0 6h5v4H0zM6.500 6h5v4h-5z" fill="currentColor" stroke="none" />
        </Icon>
      </button>
      <button aria-label="Reading view" className={view}>
        <Icon w={11} h={10}>
          <path d="M5.500 9.500V1.500L.5.500v8l5 1 5-1v-8l-5 1M2 3l2 .5M2 5l2 .5M2 7l2 .5M7 3.500 9 3M7 5.500 9 5M7 7.500 9 7" />
        </Icon>
      </button>
      <button aria-label="Slide show" className={view}>
        <Icon w={11} h={10}>
          <path d="M0 .5h11M1.500 1v4.500h8V1M5.500 5.500v4M3 9.500h5M4 3h3" />
        </Icon>
      </button>
      <button aria-label="Zoom out" className="ml-1">
        <Icon w={5} h={5}>
          <path d="M0 2.500h5" strokeWidth="1.500" />
        </Icon>
      </button>
      <input
        type="range"
        aria-label="Zoom"
        min={0}
        max={100}
        defaultValue={45}
        className="ml-1 h-3 w-[78px] appearance-none bg-transparent [&::-webkit-slider-runnable-track]:h-px [&::-webkit-slider-runnable-track]:bg-[#f8c9b4] [&::-webkit-slider-thumb]:-mt-1 [&::-webkit-slider-thumb]:h-[9px] [&::-webkit-slider-thumb]:w-[3px] [&::-webkit-slider-thumb]:appearance-none [&::-webkit-slider-thumb]:bg-white"
      />
      <button aria-label="Zoom in" className="ml-1">
        <Icon w={7} h={7}>
          <path d="M0 3.500h7M3.500 0v7" strokeWidth="1.500" />
        </Icon>
      </button>
      <button className="ml-[11px]">92%</button>
      <button aria-label="Fit slide to window" className="mr-[5px] ml-2">
        <Icon w={11} h={11}>
          <path d="M.5.500h10v10H.5z" strokeDasharray="3 1" />
          <path d="M5.500 1.500v3M5.500 6.500v3M1.500 5.500h3M6.500 5.500h3M4.500 2.500l1-1 1 1M4.500 8.500l1 1 1-1M2.500 4.500l-1 1 1 1M8.500 4.500l1 1-1 1" />
        </Icon>
      </button>
    </footer>
  );
}

export default function App() {
  return (
    <div className="flex h-screen bg-[#202125] pt-2 pr-[18px] pb-[17px] pl-6 font-['Open_Sans',sans-serif] text-[9px] leading-3">
      <div className="flex min-w-0 flex-1 flex-col border-t-4 border-black">
        <TitleBar />
        <Tabs />
        <Ribbon />
        <div className="flex min-h-0 flex-1 overflow-hidden bg-linear-to-b from-[#fbfafd] to-[#f0edef]">
          <ThumbnailPane />
          <SlidePane />
        </div>
        <StatusBar />
      </div>
    </div>
  );
}
